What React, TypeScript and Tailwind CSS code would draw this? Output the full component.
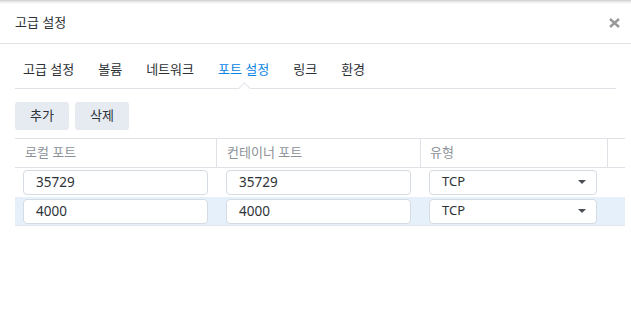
import { useState } from 'react';

const tabs = ['고급 설정', '볼륨', '네트워크', '포트 설정', '링크', '환경'];

const rows = [
  { local: '35729', container: '35729', type: 'TCP' },
  { local: '4000', container: '4000', type: 'TCP' },
];

const PortRow = ({ row, selected }: { row: (typeof rows)[number]; selected: boolean }) => (
  <div
    className={`flex h-[29px] items-center border-b ${
      selected ? 'bg-[#e6f0fb] border-[#e3e8ee]' : 'bg-white border-transparent'
    }`}
  >
    <div className="w-[202px] pl-2 pr-[9px]">
      <div className="flex h-[25px] items-center rounded-[4px] border border-[#d4dbe2] bg-white pl-3 text-[13.5px] text-[#2e3338]">
        {row.local}
      </div>
    </div>
    <div className="w-[204px] pl-[9px] pr-[10px]">
      <div className="flex h-[25px] items-center rounded-[4px] border border-[#d4dbe2] bg-white pl-3 text-[13.5px] text-[#2e3338]">
        {row.container}
      </div>
    </div>
    <div className="w-[187px] pl-[8px] pr-[11px]">
      <div className="flex h-[25px] items-center justify-between rounded-[4px] border border-[#d4dbe2] bg-white pl-3 pr-[10px] text-[13px] text-[#2e3338]">
        <span>{row.type}</span>
        <svg width="8" height="4" viewBox="0 0 8 4">
          <path d="M0 0h8L4 4z" fill="#4a4f55" />
        </svg>
      </div>
    </div>
  </div>
);

const App = () => {
  const [active, setActive] = useState(3);
  const [selected] = useState(1);

  return (
    <div
      className="h-[317px] w-[631px] overflow-hidden bg-white"
      style={{ fontFamily: '"Noto Sans", "Noto Sans CJK KR", sans-serif' }}
    >
      {/* Header */}
      <div className="flex h-[44px] items-center justify-between border-b border-[#dfe3e8] bg-[linear-gradient(to_bottom,#cfcfcf_0px,#ececec_2px,#ffffff_4px)] pl-[15px] pr-[9px] pt-[2px]">
        <span className="text-[13px] text-[#2b3035]">고급 설정</span>
        <button className="flex h-[16px] w-[16px] items-center justify-center">
          <svg width="11" height="10" viewBox="0 0 11 10">
            <path d="M1 1l9 8M10 1l-9 8" stroke="#999" strokeWidth="2.4" />
          </svg>
        </button>
      </div>

      {/* Tabs */}
      <div className="relative mx-[15px] flex h-[45px] items-center border-b border-[#dfe3e8] pl-[8px] pt-2">
        {tabs.map((t, i) => (
          <button
            key={t}
            onClick={() => setActive(i)}
            className={`mr-[24px] text-[13px] ${i === active ? 'text-[#0a84e6]' : 'text-[#2b3035]'}`}
          >
            {t}
          </button>
        ))}
        <div className="absolute bottom-[-5px] left-[225px] h-[9px] w-[9px] rotate-45 border-l border-t border-[#dfe3e8] bg-white" />
      </div>

      {/* Toolbar */}
      <div className="ml-[15px] mt-[13px] flex gap-[6px]">
        <button className="h-[28px] w-[54px] rounded-[3px] bg-[#e6ebf1] text-[13px] text-[#2e3338]">추가</button>
        <button className="h-[28px] w-[54px] rounded-[3px] bg-[#e6ebf1] text-[13px] text-[#2e3338]">삭제</button>
      </div>

      {/* Table */}
      <div className="mr-[6px] ml-[15px] mt-[8px]">
        <div className="flex h-[30px] border-y border-[#dfe3e8] text-[13px] text-[#8c9299]">
          <div className="flex w-[202px] items-center border-r border-[#dfe3e8] pl-[10px]">로컬 포트</div>
          <div className="flex w-[204px] items-center border-r border-[#dfe3e8] pl-[10px]">컨테이너 포트</div>
          <div className="flex w-[187px] items-center border-r border-[#dfe3e8] pl-[9px]">유형</div>
          <div className="flex-1" />
        </div>
        {rows.map((r, i) => (
          <PortRow key={i} row={r} selected={i === selected} />
        ))}
      </div>
    </div>
  );
};

export default App;
